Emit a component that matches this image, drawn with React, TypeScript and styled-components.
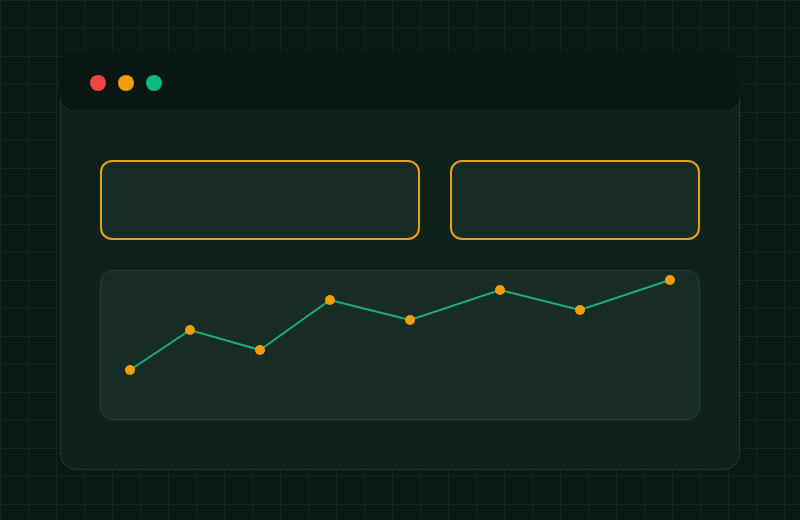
import React from 'react';
import styled, { createGlobalStyle } from 'styled-components';

const GlobalStyle = createGlobalStyle`
  html, body { margin: 0; padding: 0; background: #0b1914; }
  body { font-family: "Inter", "Liberation Sans", sans-serif; }
`;

const Page = styled.div`
  width: 800px;
  height: 520px;
  box-sizing: border-box;
  padding: 50px 60px;
  background-color: #0b1914;
  background-image:
    linear-gradient(to right, #15281f 1px, transparent 1px),
    linear-gradient(to bottom, #15281f 1px, transparent 1px);
  background-size: 28px 28px;
`;

const Window = styled.div`
  width: 680px;
  height: 420px;
  box-sizing: border-box;
  display: flex;
  flex-direction: column;
  background: #10201a;
  border: 1px solid #1d3a2f;
  border-radius: 16px;
`;

const TitleBar = styled.div`
  height: 60px;
  box-sizing: border-box;
  margin: -1px -1px 0;
  display: flex;
  align-items: flex-start;
  gap: 12px;
  padding: 25px 0 0 30px;
  background: #0a1611;
  border-radius: 16px;
`;

const Dot = styled.span<{ $color: string }>`
  width: 16px;
  height: 16px;
  border-radius: 50%;
  background: ${({ $color }) => $color};
`;

const Content = styled.div`
  display: flex;
  flex-direction: column;
  gap: 30px;
  padding: 50px 39px 0;
`;

const CardRow = styled.div`
  display: flex;
  gap: 30px;
`;

const Card = styled.div<{ $width: number }>`
  width: ${({ $width }) => $width}px;
  height: 80px;
  box-sizing: border-box;
  background: #172c24;
  border: 2px solid #e3a21f;
  border-radius: 12px;
`;

const ChartPanel = styled.div`
  width: 600px;
  height: 150px;
  box-sizing: border-box;
  background: #172c24;
  border: 1px solid #1f3d32;
  border-radius: 12px;
  overflow: hidden;
`;

const points: [number, number][] = [
  [30, 100], [90, 60], [160, 80], [230, 30], [310, 50], [400, 20], [480, 40], [570, 10],
];

const Chart = () => (
  <svg width="600" height="150" viewBox="0 0 600 150" style={{ display: 'block', margin: -1 }}>
    <polyline
      points={points.map(([x, y]) => `${x},${y}`).join(' ')}
      fill="none"
      stroke="#1fae7f"
      strokeWidth="2"
    />
    {points.map(([x, y]) => (
      <circle key={x} cx={x} cy={y} r="5" fill="#f59e0b" />
    ))}
  </svg>
);

export default function App() {
  return (
    <>
      <GlobalStyle />
      <Page>
        <Window>
          <TitleBar>
            <Dot $color="#ef4444" />
            <Dot $color="#f59e0b" />
            <Dot $color="#10b981" />
          </TitleBar>
          <Content>
            <CardRow>
              <Card $width={320} />
              <Card $width={250} />
            </CardRow>
            <ChartPanel>
              <Chart />
            </ChartPanel>
          </Content>
        </Window>
      </Page>
    </>
  );
}
